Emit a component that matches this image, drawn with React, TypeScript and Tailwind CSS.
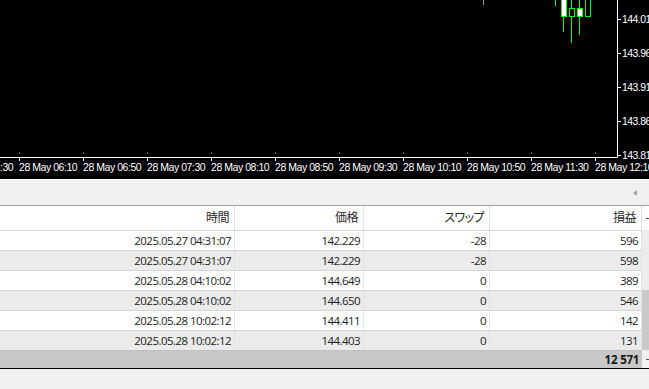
import React from 'react'

const times = ['05:30', '06:10', '06:50', '07:30', '08:10', '08:50', '09:30', '10:10', '10:50', '11:30', '12:10']
const prices = ['144.01', '143.96', '143.91', '143.86', '143.81']

const rows = [
  ['2025.05.27 04:31:07', '142.229', '-28', '596'],
  ['2025.05.27 04:31:07', '142.229', '-28', '598'],
  ['2025.05.28 04:10:02', '144.649', '0', '389'],
  ['2025.05.28 04:10:02', '144.650', '0', '546'],
  ['2025.05.28 10:02:12', '144.411', '0', '142'],
  ['2025.05.28 10:02:12', '144.403', '0', '131'],
]

const cols = ['w-[235px]', 'w-[129px]', 'w-[126px]', 'w-[152px]']
const headers = ['時間', '価格', 'スワップ', '損益']

function Chart() {
  const green = '#00ff00'
  return (
    <svg width={649} height={179} className="block bg-black">
      {/* candles */}
      <line x1={483.5} y1={0} x2={483.5} y2={5} stroke="#9a9a9a" />
      <line x1={555.5} y1={0} x2={555.5} y2={6} stroke={green} />
      <line x1={563.5} y1={17} x2={563.5} y2={32} stroke={green} />
      <rect x={561.5} y={-1} width={5} height={17.5} fill="#ffffff" stroke={green} />
      <line x1={571.5} y1={0} x2={571.5} y2={43} stroke={green} />
      <rect x={569.5} y={8.5} width={5} height={8} fill="#000" stroke={green} />
      <line x1={579.5} y1={0} x2={579.5} y2={35} stroke={green} />
      <rect x={577.5} y={8.5} width={5} height={8} fill="#ffffff" stroke={green} />
      <line x1={587.5} y1={0} x2={587.5} y2={2} stroke={green} />
      <rect x={585.5} y={-1} width={5} height={17.5} fill="#000" stroke={green} />

      {/* axes */}
      <line x1={617.5} y1={0} x2={617.5} y2={157.5} stroke="#ffffff" />
      <line x1={0} y1={157.5} x2={617.5} y2={157.5} stroke="#ffffff" />

      {prices.map((p, i) => (
        <g key={p}>
          <line x1={617} y1={19.5 + i * 34} x2={621} y2={19.5 + i * 34} stroke="#ffffff" />
          <text
            x={622}
            y={23 + i * 34}
            fill="#ffffff"
            fontSize={10.5}
            fontFamily="'Liberation Sans', Arial, sans-serif"
          >
            {p}
          </text>
        </g>
      ))}

      {times.map((t, i) => {
        const x = -45 + i * 64
        return (
          <g key={t}>
            <line x1={x + 0.5} y1={157} x2={x + 0.5} y2={161} stroke="#ffffff" />
            <line x1={x + 0.5} y1={152} x2={x + 0.5} y2={154} stroke="#555555" />
            <text
              x={x}
              y={171}
              fill="#ffffff"
              fontSize={10.5}
              letterSpacing={-0.45}
              fontFamily="'Liberation Sans', Arial, sans-serif"
            >
              28 May {t}
            </text>
          </g>
        )
      })}
    </svg>
  )
}

export default function App() {
  return (
    <div className="w-[649px] h-[389px] overflow-hidden bg-[#f0f0f0] flex flex-col font-['Open_Sans','Noto_Sans_CJK_JP',sans-serif] text-[11.5px] tracking-[-0.55px] [font-feature-settings:'palt']">
      <div className="border-b border-white">
        <Chart />
      </div>

      {/* toolbar */}
      <div className="h-[25px] shrink-0 flex items-center justify-end pr-[12px] pt-[1px]">
        <svg width={4} height={6} viewBox="0 0 4 6">
          <path d="M4 0 L0 3 L4 6 Z" fill="#a5a5a5" />
        </svg>
      </div>

      {/* table */}
      <div className="flex shrink-0">
        <div className="w-[642px]">
          <div className="flex h-[25px] bg-white border-t border-[#a0a0a0] text-[#2a2a2a] text-[12px]">
            {headers.map((h, i) => (
              <div
                key={h}
                className={`${cols[i]} flex items-center justify-end pr-[5px] border-r border-[#e3e3e3]`}
              >
                {h}
              </div>
            ))}
          </div>
          {rows.map((r, ri) => (
            <div
              key={ri}
              className={`flex h-[20px] border-t border-[#d5d5d5] text-[#1c1c1c] ${
                ri % 2 === 1 ? 'bg-[#ebebeb]' : 'bg-white'
              }`}
            >
              {r.map((c, ci) => (
                <div
                  key={ci}
                  className={`${cols[ci]} flex items-center justify-end pr-[3px] border-r border-[#e3e3e3]`}
                >
                  {c}
                </div>
              ))}
            </div>
          ))}
          <div className="h-[18px] border-t border-[#c0c0c0] bg-[#c8c8c8] flex items-center justify-end pr-[3px] font-bold text-[#1a1a1a] tracking-[-0.3px]">
            <span>12</span>
            <span className="ml-[3px]">571</span>
          </div>
        </div>

        {/* scroll strip */}
        <div className="w-[7px] flex flex-col">
          <div className="h-[25px] border-t border-[#a0a0a0] bg-white flex items-center justify-end">
            <div className="w-[3px] h-px bg-[#555555]" />
          </div>
          <div className="h-[60px] bg-[#ececec]" />
          <div className="h-[60px] bg-[#c9c9c9]" />
          <div className="h-[18px] bg-[#f0f0f0] flex items-center justify-end">
            <div className="w-[3px] h-px bg-[#555555]" />
          </div>
        </div>
      </div>
      <div className="h-px bg-black shrink-0" />
    </div>
  )
}
